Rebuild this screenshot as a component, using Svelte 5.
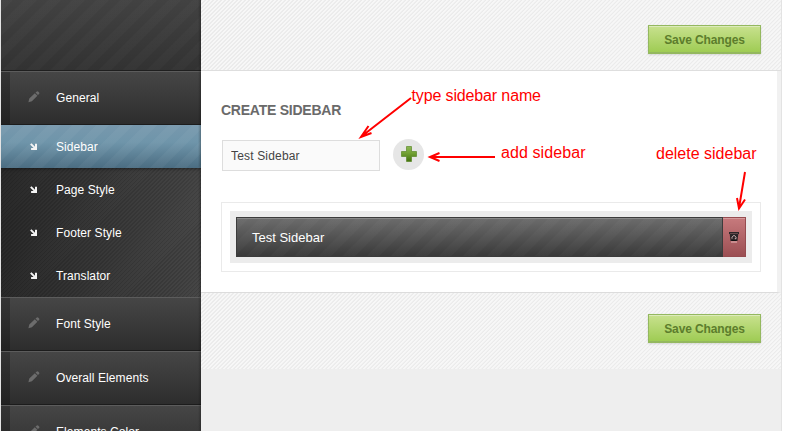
<script>
  const sections = [
    { label: 'General', children: ['Sidebar', 'Page Style', 'Footer Style', 'Translator'] },
    { label: 'Font Style', children: [] },
    { label: 'Overall Elements', children: [] },
    { label: 'Elements Color', children: [] }
  ];
  const active = 'Sidebar';
  let name = $state('Test Sidebar');
</script>

<div class="page">
  <nav>
    <div class="brand"></div>
    {#each sections as section}
      <a class="section">
        <svg class="pencil" width="12" height="12" viewBox="0 0 12 12">
          <path d="M.4 11.2 1.3 7.6 6.8 2.2 9.4 4.8 3.9 10.2ZM7.5 1.6 8.9.4Q9.7 0 10.4.7L11.1 1.4Q11.7 2.1 11.1 2.9L9.9 4.1Z" fill="#6c6c6c" />
        </svg>
        <span>{section.label}</span>
      </a>
      {#if section.children.length}
        <div class="sub">
          {#each section.children as child}
            <a class="item" class:active={child === active}>
              <svg class="arrow" width="8" height="8" viewBox="0 0 8 8">
                <path d="M.8.9 5.3 5.4M6 .8V6.1H1.1" fill="none" stroke="#f4f4f4" stroke-width="2" />
              </svg>
              <span>{child}</span>
            </a>
          {/each}
        </div>
      {/if}
    {/each}
  </nav>

  <main>
    <header class="bar"><button class="save">Save Changes</button></header>
    <section class="content">
      <h2>CREATE SIDEBAR</h2>
      <div class="form">
        <input type="text" bind:value={name} />
        <button class="add" aria-label="Add sidebar">
          <svg width="16" height="16" viewBox="0 0 16 16">
            <defs>
              <linearGradient id="leaf" gradientUnits="userSpaceOnUse" x1="0" y1="0" x2="0" y2="16">
                <stop offset="0" stop-color="#8fb957" />
                <stop offset=".45" stop-color="#72a133" />
                <stop offset="1" stop-color="#41700b" />
              </linearGradient>
            </defs>
            <path d="M5.5.5H10.5V5.5H15.5V10.5H10.5V15.5H5.5V10.5H.5V5.5H5.5Z" fill="url(#leaf)" stroke="#4e7e18" stroke-opacity=".6" />
          </svg>
        </button>
      </div>
      <div class="list">
        <div class="slot">
          <div class="entry">
            <span class="title">Test Sidebar</span>
            <button class="delete" aria-label="Delete sidebar">
              <svg width="10" height="11" viewBox="0 0 10 11">
                <path d="M0 0H10V2H9.3L8.5 9H1.5L.7 2H0Z" fill="#2d2528" />
                <path d="M2 10H8" stroke="#e8b9b9" />
                <path d="M3 6.7V5.2L5 3.2 7 5.2V6.7H5.8" fill="none" stroke="#cfb4b5" />
                <path d="M1 1.5H9" stroke="#66494b" />
                <path d="M2.5 8.5H7.5" stroke="#101010" />
              </svg>
            </button>
          </div>
        </div>
      </div>
    </section>
    <footer class="bar bottom"><button class="save">Save Changes</button></footer>
  </main>

  <svg class="notes" width="797" height="431" viewBox="0 0 797 431">
    <g fill="none" stroke="#f00" stroke-width="2">
      <path d="M411 98 362 136M368.5 126 361 137 371.5 133" />
      <path d="M495 157H430M439.5 153 430 157 439.5 161" />
      <path d="M745 172 739 208M737 198 739 208.5 745 199.5" />
    </g>
    <g fill="#f00" font-size="16">
      <text x="411.5" y="101" textLength="129.5">type sidebar name</text>
      <text x="501" y="158" textLength="84.5">add sidebar</text>
      <text x="656" y="159" textLength="100.5">delete sidebar</text>
    </g>
  </svg>
</div>

<style>
  :global(body) { margin: 0; background: #fff; }
  .page {
    position: relative;
    display: flex;
    box-sizing: border-box;
    width: 797px;
    height: 431px;
    padding-left: 1px;
    overflow: hidden;
    background: linear-gradient(90deg, #e4e4e4 1px, #fff 1px);
    font-family: 'Liberation Sans', Arial, sans-serif;
  }
  nav {
    position: relative;
    flex: none;
    width: 200px;
    color: #fff;
    font-size: 12px;
    letter-spacing: 0.08px;
  }
  nav::after {
    content: '';
    position: absolute;
    inset: 0 0 0 auto;
    width: 3px;
    background: linear-gradient(90deg, transparent, rgba(0, 0, 0, 0.25));
  }
  .brand {
    height: 70px;
    background:
      repeating-linear-gradient(135deg, rgba(255, 255, 255, 0.018) 0 8px, transparent 9px 16px, rgba(255, 255, 255, 0.018) 17px),
      linear-gradient(#424242, #323232);
    border-bottom: 1px solid #1f1f1f;
  }
  .section, .item { display: flex; align-items: center; box-sizing: border-box; }
  .section {
    height: 54px;
    padding-left: 27px;
    border-top: 1px solid #5c5c5c;
    border-bottom: 1px solid #1c1c1c;
    background:
      linear-gradient(90deg, rgba(0, 0, 0, 0.25) 9px, transparent 9px),
      linear-gradient(#464646, #2d2d2d);
  }
  .pencil { margin: 0 16px 2px 0; }
  .sub {
    height: 172px;
    overflow: hidden;
    background:
      repeating-linear-gradient(135deg, rgba(0, 0, 0, 0.12) 0 1px, transparent 1.2px 2.8px),
      linear-gradient(90deg, #292929, #464646);
  }
  .item { height: 43px; padding-left: 29px; }
  .arrow { margin-right: 18px; }
  .active {
    background:
      repeating-linear-gradient(135deg, rgba(255, 255, 255, 0.04) 0 8px, transparent 9px 16px, rgba(255, 255, 255, 0.04) 17px),
      linear-gradient(#7798ad, #6f95aa 40%, #4b6d82);
    box-shadow: 0 1px 3px rgba(0, 0, 0, 0.45);
  }
  main {
    display: flex;
    flex-direction: column;
    box-sizing: border-box;
    width: 581px;
    border-right: 1px solid #e3e3e3;
    background: #eee;
  }
  .bar {
    display: flex;
    flex: none;
    justify-content: flex-end;
    align-items: flex-start;
    box-sizing: border-box;
    height: 71px;
    padding: 25px 20px 0 0;
    border-bottom: 1px solid #dedede;
    background: repeating-linear-gradient(135deg, #ebebeb 0 1px, #f7f7f7 1.3px 2.55px, #ebebeb 2.83px);
  }
  .bottom { height: 76px; padding-top: 21px; border: 0; }
  .save {
    box-sizing: border-box;
    width: 113px;
    height: 29px;
    padding: 2px 0 0;
    border: 1px solid #94b85f;
    border-bottom-width: 2px;
    background: linear-gradient(#c8e18e, #9fcc54);
    box-shadow: inset 0 1px #dceabb, 0 1px 2px rgba(0, 0, 0, 0.12);
    color: #5c7d2c;
    font: bold 12px 'Liberation Sans', Arial, sans-serif;
    letter-spacing: -0.12px;
  }
  .content {
    box-sizing: border-box;
    height: 222px;
    padding: 31px 16px 0 20px;
    border-right: 4px solid #f1f1f1;
    border-bottom: 1px solid #dcdcdc;
    background: #fff;
  }
  h2 {
    margin: 0;
    color: #6a6a6a;
    font-size: 14px;
    line-height: 16px;
    letter-spacing: -0.24px;
  }
  .form { display: flex; align-items: center; gap: 13px; height: 33px; margin: 21px 0 0 1px; }
  input {
    box-sizing: border-box;
    width: 158px;
    height: 31px;
    padding: 0 8px;
    border: 1px solid #ddd;
    background: #fafafa;
    color: #444;
    font: 12px 'Liberation Sans', Arial, sans-serif;
    letter-spacing: 0.17px;
  }
  .add {
    display: flex;
    align-items: flex-start;
    justify-content: flex-start;
    box-sizing: border-box;
    width: 31px;
    height: 31px;
    margin-top: -2px;
    padding: 7px 0 0 8px;
    border: 0;
    border-radius: 50%;
    background: #e6e6e6;
  }
  .list {
    box-sizing: border-box;
    width: 540px;
    height: 70px;
    margin-top: 30px;
    padding: 8px;
    border: 1px solid #eaeaea;
  }
  .slot { box-sizing: border-box; height: 52px; padding: 6px; background: #ececec; }
  .entry { display: flex; height: 40px; }
  .title {
    display: flex;
    flex: 1;
    align-items: center;
    box-sizing: border-box;
    padding-left: 15px;
    border: 1px solid #3c3c3c;
    background:
      repeating-linear-gradient(135deg, rgba(255, 255, 255, 0.022) 0 8px, transparent 9px 16px, rgba(255, 255, 255, 0.022) 17px),
      linear-gradient(#6c6c6c, #3a3a3a);
    box-shadow: inset 0 1px #888;
    color: #fff;
    font-size: 13px;
  }
  .delete {
    display: grid;
    place-items: center;
    width: 23px;
    padding: 0;
    border: 1px solid #964c50;
    border-left: 0;
    background: linear-gradient(#c77a7d, #9c4f53);
    box-shadow: inset 0 1px #d69a9c;
  }
  .notes { position: absolute; inset: 0; pointer-events: none; }
</style>
